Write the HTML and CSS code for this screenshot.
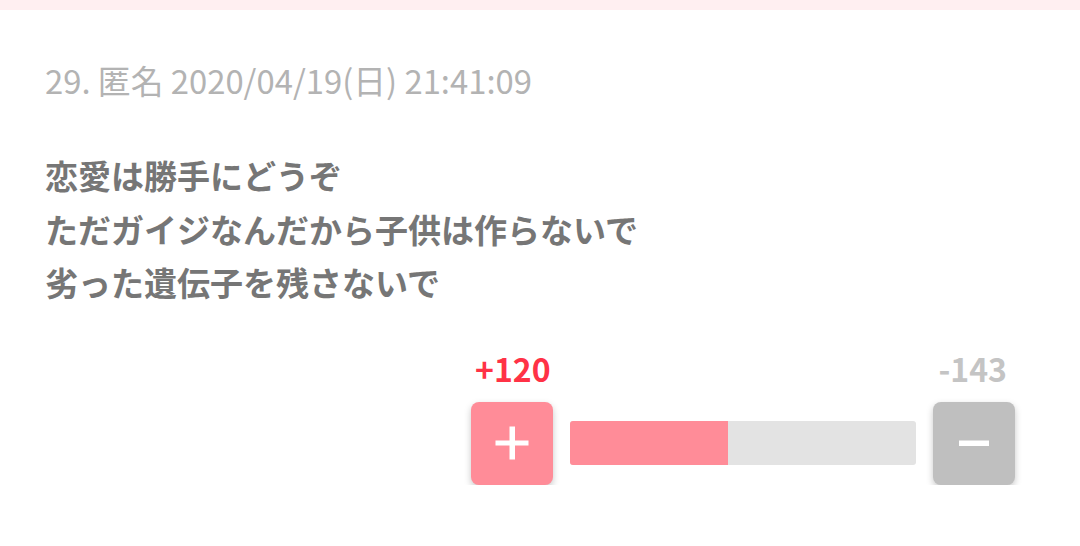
FILE: index.html
```html
<!DOCTYPE html>
<html lang="ja">
<head>
  <meta charset="UTF-8">
  <meta name="viewport" content="width=device-width, initial-scale=1.0">
  <title>コメント</title>
  <link rel="stylesheet" href="styles.css">
</head>
<body>

  <div class="top-bar"></div>

  <article class="comment">
    <p class="comment-meta">29. 匿名 2020/04/19(日) 21:41:09</p>

    <div class="comment-body">
      恋愛は勝手にどうぞ<br>
      ただガイジなんだから子供は作らないで<br>
      劣った遺伝子を残さないで
    </div>

    <div class="vote">
      <div class="vote-counts">
        <span class="count-plus">+120</span>
        <span class="count-minus">-143</span>
      </div>
      <div class="vote-row">
        <button class="vote-btn btn-plus" aria-label="プラス">
          <svg width="34" height="34" viewBox="0 0 34 34">
            <rect x="14.5" y="0.5" width="5.5" height="33" fill="#fff"/>
            <rect x="0.5" y="14.5" width="33" height="5" fill="#fff"/>
          </svg>
        </button>
        <div class="vote-bar">
          <div class="vote-bar-fill" style="width: 45.6%"></div>
        </div>
        <button class="vote-btn btn-minus" aria-label="マイナス">
          <svg width="34" height="34" viewBox="0 0 34 34">
            <rect x="2" y="14.5" width="30" height="5.5" fill="#fff"/>
          </svg>
        </button>
      </div>
    </div>
  </article>

</body>
</html>
```

FILE: styles.css
```css
body {
  font-family: "Noto Sans CJK JP", "Noto Sans", sans-serif;
  margin: 0;
  padding: 0;
  background-color: #fff;
}

.top-bar {
  height: 10px;
  background-color: #ffeff1;
}

.comment {
  padding: 53px 45px 0 45px;
}

.comment-meta {
  margin: 0;
  font-size: 32.8px;
  line-height: 34px;
  color: #b3b3b3;
}

.comment-body {
  margin-top: 52px;
  font-size: 33px;
  font-weight: bold;
  line-height: 53.5px;
  color: #767676;
}

.vote {
  width: 544px;
  margin: 38px 20px 0 auto;
}

.vote-counts {
  display: flex;
  justify-content: space-between;
  padding: 0 8px 0 4px;
  font-size: 32px;
  font-weight: bold;
  line-height: 40px;
}

.count-plus {
  color: #ff3246;
}

.count-minus {
  color: #c4c4c4;
}

.vote-row {
  display: flex;
  align-items: center;
  gap: 17px;
  margin-top: 14px;
}

.vote-btn {
  width: 82px;
  height: 83px;
  flex-shrink: 0;
  display: flex;
  align-items: center;
  justify-content: center;
  border: none;
  border-radius: 8px;
  padding: 0;
  box-shadow: 0 3px 7px rgba(0, 0, 0, 0.22);
  cursor: pointer;
}

.btn-plus {
  background-color: #ff8c98;
}

.btn-minus {
  background-color: #bfbfbf;
}

.vote-bar {
  flex: 1;
  height: 44px;
  background-color: #e3e3e3;
  border-radius: 3px;
  overflow: hidden;
}

.vote-bar-fill {
  height: 100%;
  background-color: #ff8c98;
}
```
